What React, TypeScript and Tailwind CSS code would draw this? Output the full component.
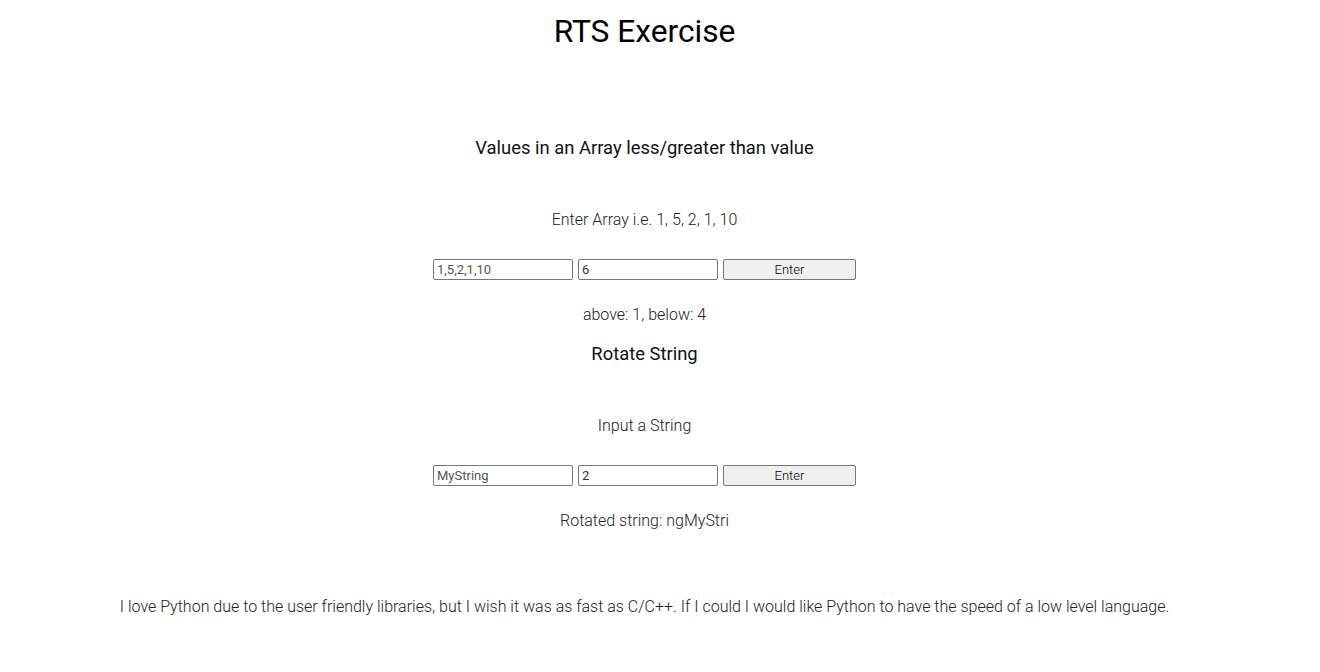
import React from 'react';

const roboto = { fontFamily: 'Roboto, "Liberation Sans", sans-serif' };

const InputRow = ({ first, second }: { first: string; second: string }) => (
  <div className="flex items-center justify-center gap-[5px] h-[21px]">
    <input
      defaultValue={first}
      className="w-[140px] h-[21px] border border-[#767676] rounded-[2px] px-[3px] text-[13px] font-normal text-[#555] bg-white outline-none"
    />
    <input
      defaultValue={second}
      className="w-[140px] h-[21px] border border-[#767676] rounded-[2px] px-[3px] text-[13px] font-normal text-[#333] bg-white outline-none"
    />
    <button className="w-[133px] h-[21px] border border-[#767676] rounded-[2px] bg-[#efefef] text-[13px] font-light text-black">
      Enter
    </button>
  </div>
);

const Exercise = ({
  heading,
  label,
  first,
  second,
  result,
  gap,
}: {
  heading: string;
  label: string;
  first: string;
  second: string;
  result: string;
  gap: string;
}) => (
  <section className={`flex flex-col items-center ${gap}`}>
    <h3 className="text-[18.4px] leading-[22px] font-normal text-[#111]">{heading}</h3>
    <p className="mt-[51px] text-[16px] leading-[20px] font-light text-[#222]">{label}</p>
    <div className="mt-[29px]">
      <InputRow first={first} second={second} />
    </div>
    <p className="mt-[25px] text-[16px] leading-[20px] font-light text-[#222]">{result}</p>
  </section>
);

export default function App() {
  return (
    <div className="w-[1289px] min-h-[672px] bg-white text-center" style={roboto}>
      <h1 className="pt-[13px] text-[31.7px] leading-[38px] font-normal text-black">RTS Exercise</h1>
      <Exercise
        gap="mt-[86px]"
        heading="Values in an Array less/greater than value"
        label="Enter Array i.e. 1, 5, 2, 1, 10"
        first="1,5,2,1,10"
        second="6"
        result="above: 1, below: 4"
      />
      <Exercise
        gap="mt-[18px]"
        heading="Rotate String"
        label="Input a String"
        first="MyString"
        second="2"
        result="Rotated string: ngMyStri"
      />
      <p className="mt-[66px] text-[16px] leading-[20px] font-light text-[#222]">
        I love Python due to the user friendly libraries, but I wish it was as fast as C/C++. If I could I would like Python to have the speed of a low level language.
      </p>
    </div>
  );
}
